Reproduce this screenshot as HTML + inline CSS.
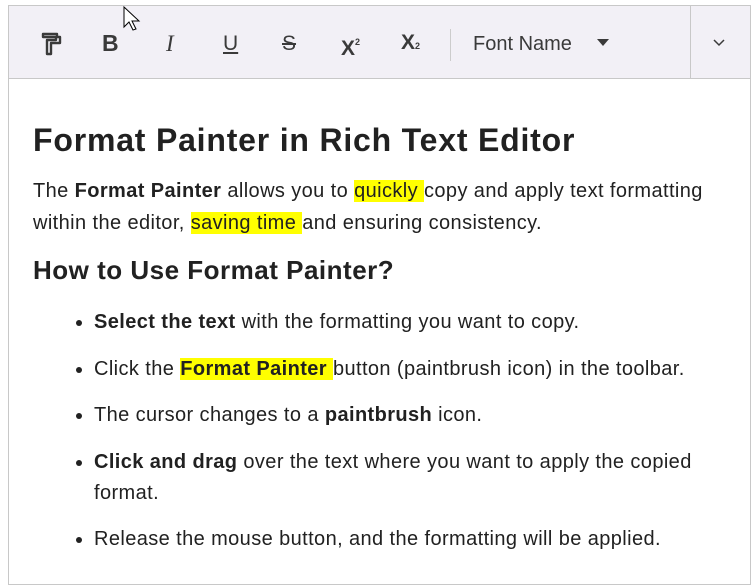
<!DOCTYPE html>
<html><head><style>
*{margin:0;padding:0;box-sizing:border-box}
body{width:756px;height:570px;background:#fff;font-family:"Liberation Sans",Arial,sans-serif;color:#212121;position:relative;overflow:hidden}
.ed{position:absolute;left:8px;top:5px;width:743px;height:580px;border:1px solid #c8c8c8}
.tb{position:absolute;left:0;top:0;width:741px;height:73px;background:#f2f0f6;border-bottom:1px solid #c8c8c8}
.ic{position:absolute;top:26px;font-size:23px;color:#3a3a3a;line-height:23px}
.sep{position:absolute;left:441px;top:23px;width:1px;height:32px;background:#ccc}
.vsep{position:absolute;left:681px;top:0;width:1px;height:73px;background:#c8c8c8}
.cont{position:absolute;left:24px;top:114px;width:712px}
h1{font-size:32px;line-height:40px;font-weight:bold;letter-spacing:0.8px}
p{font-size:20px;line-height:32px;margin-top:15px;letter-spacing:0.4px}
h2{font-size:26px;line-height:34px;font-weight:bold;margin-top:14px;letter-spacing:0.5px}
ul{margin-top:20px;padding-left:61px;font-size:20px;line-height:31px;letter-spacing:0.4px}
li{margin-bottom:15.5px}
.hl{background:#ffff00}
</style></head><body>
<div class="ed">
<div class="tb">
<svg class="ic" style="left:31px;top:26px" width="24" height="24" viewBox="0 0 24 24"><path d="M3 2h14v3h3v6H11v11H7V8h9V5H3z" fill="none" stroke="#3a3a3a" stroke-width="2.4" stroke-linejoin="round"/></svg>
<div class="ic" style="left:93px;font-weight:bold">B</div>
<div class="ic" style="left:157px;font-style:italic;font-family:'Liberation Serif',serif">I</div>
<div class="ic" style="left:214px;text-decoration:underline;font-size:21px">U</div>
<div class="ic" style="left:273px;text-decoration:line-through;font-size:21px">S</div>
<div class="ic" style="left:332px;top:25px;font-weight:bold;font-size:21px">X<sup style="font-size:9px;vertical-align:10px">2</sup></div>
<div class="ic" style="left:392px;top:25px;font-weight:bold;font-size:21px">X<span style="font-size:9px">2</span></div>
<div class="sep"></div>
<div class="ic" style="left:464px;top:27px;font-size:20px">Font Name</div>
<svg style="position:absolute;left:588px;top:33px" width="12" height="7"><path d="M0 0h12L6 7z" fill="#3a3a3a"/></svg>
<div class="vsep"></div>
<svg style="position:absolute;left:704px;top:33px" width="12" height="8"><path d="M1 1l5 5 5-5" fill="none" stroke="#3a3a3a" stroke-width="1.5"/></svg>
</div>
<div class="cont">
<h1>Format Painter in Rich Text Editor</h1>
<p>The <b>Format Painter</b> allows you to <span class="hl">quickly </span>copy and apply text formatting within the editor, <span class="hl">saving time </span>and ensuring consistency.</p>
<h2>How to Use Format Painter?</h2>
<ul>
<li><b>Select the text</b> with the formatting you want to copy.</li>
<li>Click the <b class="hl">Format Painter </b>button (paintbrush icon) in the toolbar.</li>
<li>The cursor changes to a <b>paintbrush</b> icon.</li>
<li><b>Click and drag</b> over the text where you want to apply the copied format.</li>
<li>Release the mouse button, and the formatting will be applied.</li>
</ul>
</div>
</div>
<svg style="position:absolute;left:123px;top:6px" width="18" height="28"><path d="M1 1v20l5-5 4 8 3-1-4-8h7z" fill="#fff" stroke="#000" stroke-width="1"/></svg>
</body></html>
